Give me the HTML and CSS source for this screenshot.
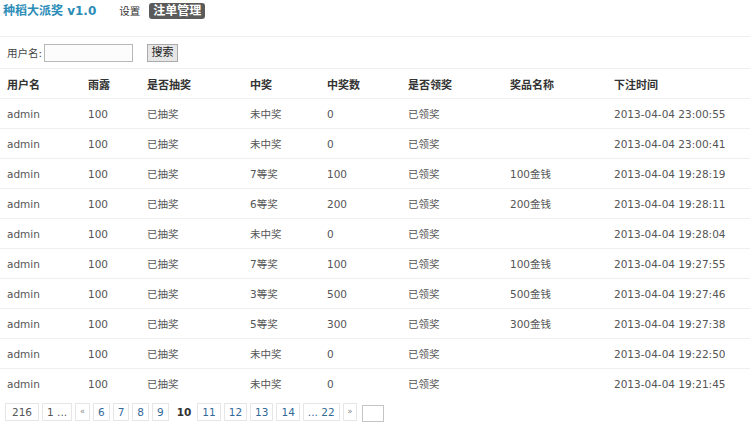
FILE: index.html
```html
<!DOCTYPE html>
<html lang="zh-CN">
<head>
<meta charset="utf-8">
<title>注单管理</title>
<link rel="stylesheet" href="styles.css">
</head>
<body>
<div class="topbar">
  <span class="brand">种稻大派奖 v1.0</span>
  <nav class="nav">
    <a class="nav-item">设置</a>
    <a class="nav-item active">注单管理</a>
  </nav>
</div>
<form class="search">
  <label class="search-label">用户名:</label>
  <span class="search-input"></span>
  <span class="search-btn">搜索</span>
</form>
<table class="grid">
  <colgroup>
    <col class="c1"><col class="c2"><col class="c3"><col class="c4"><col class="c5"><col class="c6"><col class="c7"><col>
  </colgroup>
  <thead>
    <tr><th>用户名</th><th>雨露</th><th>是否抽奖</th><th>中奖</th><th>中奖数</th><th>是否领奖</th><th>奖品名称</th><th>下注时间</th></tr>
  </thead>
  <tbody>
    <tr><td>admin</td><td>100</td><td>已抽奖</td><td>未中奖</td><td>0</td><td>已领奖</td><td></td><td>2013-04-04 23:00:55</td></tr>
    <tr><td>admin</td><td>100</td><td>已抽奖</td><td>未中奖</td><td>0</td><td>已领奖</td><td></td><td>2013-04-04 23:00:41</td></tr>
    <tr><td>admin</td><td>100</td><td>已抽奖</td><td>7等奖</td><td>100</td><td>已领奖</td><td>100金钱</td><td>2013-04-04 19:28:19</td></tr>
    <tr><td>admin</td><td>100</td><td>已抽奖</td><td>6等奖</td><td>200</td><td>已领奖</td><td>200金钱</td><td>2013-04-04 19:28:11</td></tr>
    <tr><td>admin</td><td>100</td><td>已抽奖</td><td>未中奖</td><td>0</td><td>已领奖</td><td></td><td>2013-04-04 19:28:04</td></tr>
    <tr><td>admin</td><td>100</td><td>已抽奖</td><td>7等奖</td><td>100</td><td>已领奖</td><td>100金钱</td><td>2013-04-04 19:27:55</td></tr>
    <tr><td>admin</td><td>100</td><td>已抽奖</td><td>3等奖</td><td>500</td><td>已领奖</td><td>500金钱</td><td>2013-04-04 19:27:46</td></tr>
    <tr><td>admin</td><td>100</td><td>已抽奖</td><td>5等奖</td><td>300</td><td>已领奖</td><td>300金钱</td><td>2013-04-04 19:27:38</td></tr>
    <tr><td>admin</td><td>100</td><td>已抽奖</td><td>未中奖</td><td>0</td><td>已领奖</td><td></td><td>2013-04-04 19:22:50</td></tr>
    <tr><td>admin</td><td>100</td><td>已抽奖</td><td>未中奖</td><td>0</td><td>已领奖</td><td></td><td>2013-04-04 19:21:45</td></tr>
  </tbody>
</table>
<div class="pager">
  <span class="pg total">216</span>
  <span class="pg plain">1 ...</span>
  <span class="pg arrow">&laquo;</span>
  <span class="pg">6</span>
  <span class="pg">7</span>
  <span class="pg">8</span>
  <span class="pg">9</span>
  <strong class="pg current">10</strong>
  <span class="pg">11</span>
  <span class="pg">12</span>
  <span class="pg">13</span>
  <span class="pg">14</span>
  <span class="pg">... 22</span>
  <span class="pg arrow">&raquo;</span>
  <span class="pg-input"></span>
</div>
</body>
</html>
```
FILE: styles.css
```css
html, body {
  margin: 0;
  padding: 0;
  background: #fff;
}
body {
  font-family: "DejaVu Sans", "Noto Sans CJK SC", sans-serif;
  font-size: 10.5px;
  color: #555;
}
.topbar {
  height: 37px;
  border-bottom: 1px solid #eee;
  display: flex;
  align-items: flex-start;
  padding: 3px 0 0 3px;
  box-sizing: border-box;
}
.brand {
  font-size: 12px;
  font-weight: bold;
  color: #2b8cb7;
  line-height: 16px;
}
.nav {
  display: flex;
  align-items: center;
  margin-left: 23px;
  gap: 9px;
}
.nav-item {
  font-size: 10.5px;
  color: #333;
  line-height: 16px;
}
.nav-item.active {
  background: #5b5b5b;
  color: #fff;
  font-weight: bold;
  font-size: 12px;
  border-radius: 3px;
  padding: 0 4px;
  height: 16px;
}
.search {
  height: 32px;
  margin: 0;
  border-bottom: 1px solid #eee;
  display: flex;
  align-items: center;
  padding-left: 7px;
  box-sizing: border-box;
}
.search-label {
  color: #444;
}
.search-input {
  width: 87px;
  height: 16px;
  border: 1px solid #b8b8b8;
  background: #fcfcfc;
  margin-left: 2px;
}
.search-btn {
  margin-left: 14px;
  width: 29px;
  height: 16px;
  border: 1px solid #aaa;
  background: #e6e6e6;
  color: #222;
  font-size: 11px;
  line-height: 16px;
  text-align: center;
}
.grid {
  width: 100%;
  border-collapse: collapse;
  table-layout: fixed;
}
.c1 { width: 88px; }
.c2 { width: 59px; }
.c3 { width: 103px; }
.c4 { width: 77px; }
.c5 { width: 81px; }
.c6 { width: 102px; }
.c7 { width: 104px; }
.grid th, .grid td {
  height: 29px;
  padding: 0;
  text-align: left;
  white-space: nowrap;
  border-bottom: 1px solid #eef0f0;
  vertical-align: middle;
}
.grid th:first-child, .grid td:first-child {
  padding-left: 7px;
}
.grid th {
  font-weight: bold;
  color: #333;
  font-size: 11px;
}
.grid td {
  color: #555;
}
.grid tbody tr:last-child td {
  border-bottom: none;
}
.pager {
  display: flex;
  align-items: flex-start;
  gap: 3px;
  padding: 5px 0 0 5px;
}
.pg {
  height: 16px;
  line-height: 16px;
  border: 1px solid #e6e6e6;
  padding: 0 4px;
  color: #336a98;
  font-size: 10.5px;
}
.pg.total {
  padding: 0 6px;
  color: #555;
}
.pg.plain {
  padding: 0 4px;
  color: #555;
}
.pg.arrow {
  color: #888;
  font-size: 8px;
  padding: 0 4px;
}
.pg.current {
  border-color: transparent;
  color: #333;
  font-weight: bold;
  padding: 0 2px 0 4px;
}
.pg-input {
  width: 20px;
  height: 15px;
  border: 1px solid #c4c4c4;
  margin-top: 2px;
  margin-left: 2px;
}
```
